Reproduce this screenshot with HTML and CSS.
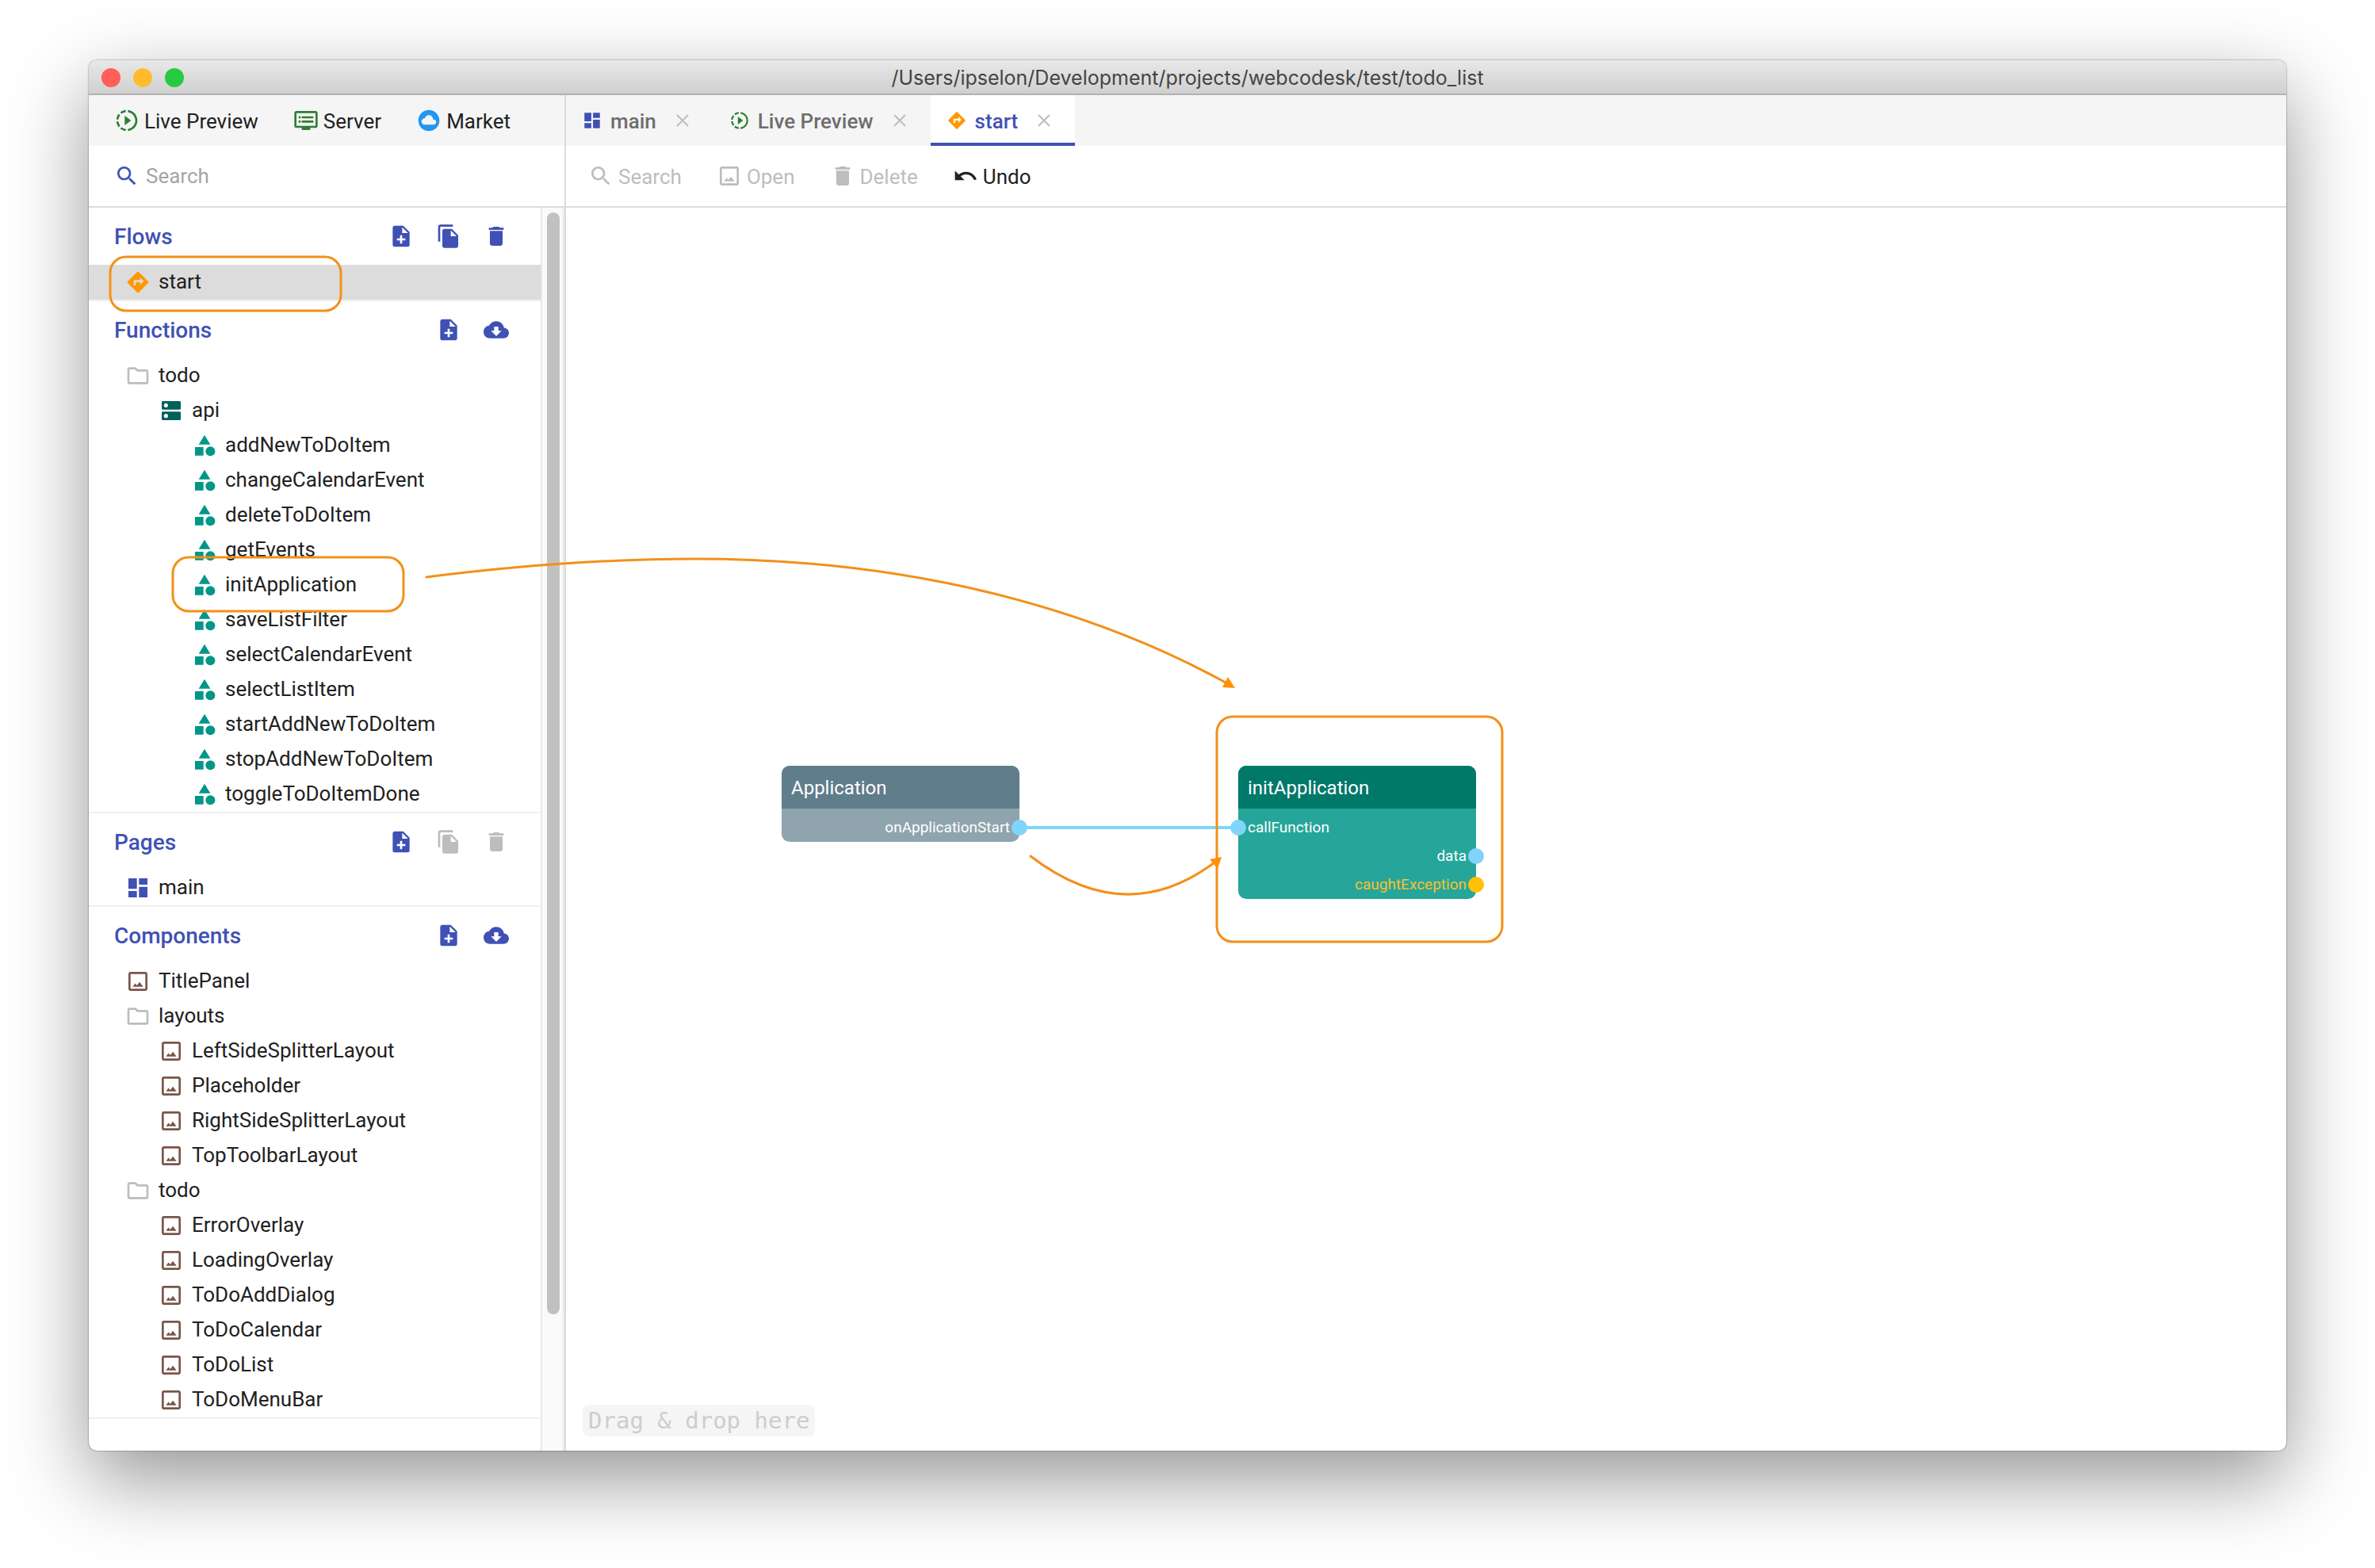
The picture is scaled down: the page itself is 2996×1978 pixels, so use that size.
FILE: index.html
```html
<!DOCTYPE html>
<html lang="en">
<head>
<meta charset="utf-8">
<title>webcodesk - todo_list</title>
<link rel="stylesheet" href="styles.css">
</head>
<body>
<svg class="sprite" aria-hidden="true">
  <symbol id="i-live" viewBox="0 0 24 24"><path d="M13.05 9.79L10 7.5v9l3.05-2.29L16 12zm0 0L10 7.5v9l3.05-2.29L16 12zM11 4.07V2.05c-2.01.2-3.84 1-5.32 2.21L7.1 5.69c1.11-.86 2.44-1.44 3.9-1.62zM5.69 7.1L4.26 5.68C3.05 7.16 2.25 8.99 2.05 11h2.02c.18-1.46.76-2.79 1.62-3.9zM4.07 13H2.05c.2 2.01 1 3.84 2.21 5.32l1.43-1.43c-.86-1.1-1.44-2.43-1.62-3.89zm1.61 6.74C7.16 20.95 9 21.75 11 21.95v-2.02c-1.46-.18-2.79-.76-3.9-1.62l-1.42 1.43zM22 12c0 5.16-3.92 9.42-8.95 9.95v-2.02C16.97 19.41 20 16.05 20 12s-3.03-7.41-6.95-7.93V2.05C18.08 2.58 22 6.84 22 12z"/></symbol>
  <symbol id="i-server" viewBox="0 0 24 24"><path d="M21 3H3c-1.1 0-2 .9-2 2v12c0 1.1.9 2 2 2h5v2h8v-2h5c1.1 0 1.99-.9 1.99-2L23 5c0-1.1-.9-2-2-2zm0 14H3V5h18v12zm-2-9H8v2h11V8zm0 4H8v2h11v-2zM7 8H5v2h2V8zm0 4H5v2h2v-2z"/></symbol>
  <symbol id="i-market" viewBox="0 0 24 24"><path d="M12 2C6.48 2 2 6.48 2 12s4.48 10 10 10 10-4.48 10-10S17.52 2 12 2zm4.5 14H8c-1.66 0-3-1.34-3-3s1.34-3 3-3l.14.01C8.58 8.28 10.13 7 12 7c2.21 0 4 1.79 4 4h.5c1.38 0 2.5 1.12 2.5 2.5S17.88 16 16.5 16z"/></symbol>
  <symbol id="i-search" viewBox="0 0 24 24"><path d="M15.5 14h-.79l-.28-.27C15.41 12.59 16 11.11 16 9.5 16 5.91 13.09 3 9.5 3S3 5.91 3 9.5 5.91 16 9.5 16c1.61 0 3.09-.59 4.23-1.57l.27.28v.79l5 4.99L20.49 19l-4.99-5zm-6 0C7.01 14 5 11.99 5 9.5S7.01 5 9.5 5 14 7.01 14 9.5 11.99 14 9.5 14z"/></symbol>
  <symbol id="i-image" viewBox="0 0 24 24"><path d="M19 5v14H5V5h14m0-2H5c-1.1 0-2 .9-2 2v14c0 1.1.9 2 2 2h14c1.1 0 2-.9 2-2V5c0-1.1-.9-2-2-2zM7 17l2.4-3.2 1.7 2 2.500-3.200L17 17z"/></symbol>
  <symbol id="i-delete" viewBox="0 0 24 24"><path d="M6 19c0 1.1.9 2 2 2h8c1.1 0 2-.9 2-2V7H6v12zM19 4h-3.5l-1-1h-5l-1 1H5v2h14V4z"/></symbol>
  <symbol id="i-undo" viewBox="0 0 24 24"><path d="M12.5 8c-2.65 0-5.05.99-6.9 2.6L2 7v9h9l-3.62-3.62c1.39-1.16 3.16-1.88 5.12-1.88 3.54 0 6.55 2.31 7.6 5.5l2.37-.78C21.08 11.03 17.15 8 12.5 8z"/></symbol>
  <symbol id="i-page" viewBox="0 0 24 24"><path d="M3 13h8V3H3v10zm0 8h8v-6H3v6zm10 0h8V11h-8v10zm0-18v6h8V3h-8z"/></symbol>
  <symbol id="i-flow" viewBox="0 0 24 24"><path d="M21.71 11.29l-9-9c-.39-.39-1.02-.39-1.41 0l-9 9c-.39.39-.39 1.02 0 1.41l9 9c.39.39 1.02.39 1.41 0l9-9c.39-.38.39-1.01 0-1.41zM14 14.5V12h-4v3H8v-4c0-.55.45-1 1-1h5V7.5l3.5 3.5-3.5 3.5z"/></symbol>
  <symbol id="i-add" viewBox="0 0 24 24"><path d="M14 2H6c-1.1 0-1.99.9-1.99 2L4 20c0 1.1.89 2 1.99 2H18c1.1 0 2-.9 2-2V8l-6-6zm2 14h-3v3h-2v-3H8v-2h3v-3h2v3h3v2zm-3-7V3.5L18.5 9H13z"/></symbol>
  <symbol id="i-copy" viewBox="0 0 24 24"><path d="M16 1H4c-1.1 0-2 .9-2 2v14h2V3h12V1zm-1 4l6 6v10c0 1.1-.9 2-2 2H7.99C6.89 23 6 22.1 6 21l.01-14c0-1.1.89-2 1.99-2h7zm-1 7h5.5L14 6.5V12z"/></symbol>
  <symbol id="i-cloud" viewBox="0 0 24 24"><path d="M19.35 10.04C18.67 6.59 15.64 4 12 4 9.11 4 6.6 5.64 5.35 8.04 2.34 8.36 0 10.91 0 14c0 3.31 2.69 6 6 6h13c2.76 0 5-2.24 5-5 0-2.64-2.05-4.78-4.65-4.96zM17 13l-5 5-5-5h3V9h4v4h3z"/></symbol>
  <symbol id="i-folder" viewBox="0 0 24 24"><path d="M9.17 6l2 2H20v10H4V6h5.17M10 4H4c-1.1 0-1.99.9-1.99 2L2 18c0 1.1.9 2 2 2h16c1.1 0 2-.9 2-2V8c0-1.1-.9-2-2-2h-8l-2-2z"/></symbol>
  <symbol id="i-api" viewBox="0 0 24 24"><path d="M20 13H4c-.55 0-1 .45-1 1v6c0 .55.45 1 1 1h16c.55 0 1-.45 1-1v-6c0-.55-.45-1-1-1zM7 19c-1.1 0-2-.9-2-2s.9-2 2-2 2 .9 2 2-.9 2-2 2zM20 3H4c-.55 0-1 .45-1 1v6c0 .55.45 1 1 1h16c.55 0 1-.45 1-1V4c0-.55-.45-1-1-1zM7 9c-1.1 0-2-.9-2-2s.9-2 2-2 2 .9 2 2-.9 2-2 2z"/></symbol>
  <symbol id="i-func" viewBox="0 0 24 24"><path d="M12 2l-5.5 9h11zM3 13.5h8v8H3z"/><circle cx="17.5" cy="17.5" r="4.5"/></symbol>
  <symbol id="i-close" viewBox="0 0 16 16"><path d="M1 1l14 14M15 1L1 15" fill="none" stroke="currentColor" stroke-width="2"/></symbol>
</svg>

<main class="window">
  <header class="titlebar">
    <div class="lights"><span class="light red"></span><span class="light yellow"></span><span class="light green-light"></span></div>
    <h1 class="title">/Users/ipselon/Development/projects/webcodesk/test/todo_list</h1>
  </header>

  <div class="body">
    <aside class="sidebar">
      <nav class="actions bar">
        <button class="action"><svg class="icon green"><use href="#i-live"/></svg>Live Preview</button>
        <button class="action"><svg class="icon green"><use href="#i-server"/></svg>Server</button>
        <button class="action"><svg class="icon blue"><use href="#i-market"/></svg>Market</button>
      </nav>
      <label class="search"><svg class="icon indigo"><use href="#i-search"/></svg><input class="search-input" type="text" placeholder="Search" aria-label="Search"></label>

      <div class="scroller">
        <div class="tree">
          <section class="group">
            <div class="group-head"><h2 class="group-title">Flows</h2>
              <button class="tool" aria-label="Add flow"><svg class="icon"><use href="#i-add"/></svg></button>
              <button class="tool" aria-label="Copy flow"><svg class="icon"><use href="#i-copy"/></svg></button>
              <button class="tool" aria-label="Delete flow"><svg class="icon"><use href="#i-delete"/></svg></button>
            </div>
            <ul class="list">
              <li class="row selected"><svg class="icon orange"><use href="#i-flow"/></svg>start</li>
            </ul>
          </section>
          <section class="group">
            <div class="group-head"><h2 class="group-title">Functions</h2>
              <button class="tool" aria-label="Add functions"><svg class="icon"><use href="#i-add"/></svg></button>
              <button class="tool" aria-label="Download functions"><svg class="icon"><use href="#i-cloud"/></svg></button>
            </div>
            <ul class="list">
              <li class="row"><svg class="icon grey"><use href="#i-folder"/></svg>todo</li>
              <li class="row level-2"><svg class="icon deep-teal"><use href="#i-api"/></svg>api</li>
              <li class="row level-3"><svg class="icon teal"><use href="#i-func"/></svg>addNewToDoItem</li>
              <li class="row level-3"><svg class="icon teal"><use href="#i-func"/></svg>changeCalendarEvent</li>
              <li class="row level-3"><svg class="icon teal"><use href="#i-func"/></svg>deleteToDoItem</li>
              <li class="row level-3"><svg class="icon teal"><use href="#i-func"/></svg>getEvents</li>
              <li class="row level-3"><svg class="icon teal"><use href="#i-func"/></svg>initApplication</li>
              <li class="row level-3"><svg class="icon teal"><use href="#i-func"/></svg>saveListFilter</li>
              <li class="row level-3"><svg class="icon teal"><use href="#i-func"/></svg>selectCalendarEvent</li>
              <li class="row level-3"><svg class="icon teal"><use href="#i-func"/></svg>selectListItem</li>
              <li class="row level-3"><svg class="icon teal"><use href="#i-func"/></svg>startAddNewToDoItem</li>
              <li class="row level-3"><svg class="icon teal"><use href="#i-func"/></svg>stopAddNewToDoItem</li>
              <li class="row level-3"><svg class="icon teal"><use href="#i-func"/></svg>toggleToDoItemDone</li>
            </ul>
          </section>
          <section class="group">
            <div class="group-head"><h2 class="group-title">Pages</h2>
              <button class="tool" aria-label="Add page"><svg class="icon"><use href="#i-add"/></svg></button>
              <button class="tool" aria-label="Copy page" disabled><svg class="icon"><use href="#i-copy"/></svg></button>
              <button class="tool" aria-label="Delete page" disabled><svg class="icon"><use href="#i-delete"/></svg></button>
            </div>
            <ul class="list">
              <li class="row"><svg class="icon indigo"><use href="#i-page"/></svg>main</li>
            </ul>
          </section>
          <section class="group">
            <div class="group-head"><h2 class="group-title">Components</h2>
              <button class="tool" aria-label="Add component"><svg class="icon"><use href="#i-add"/></svg></button>
              <button class="tool" aria-label="Download components"><svg class="icon"><use href="#i-cloud"/></svg></button>
            </div>
            <ul class="list">
              <li class="row"><svg class="icon brown"><use href="#i-image"/></svg>TitlePanel</li>
              <li class="row"><svg class="icon grey"><use href="#i-folder"/></svg>layouts</li>
              <li class="row level-2"><svg class="icon brown"><use href="#i-image"/></svg>LeftSideSplitterLayout</li>
              <li class="row level-2"><svg class="icon brown"><use href="#i-image"/></svg>Placeholder</li>
              <li class="row level-2"><svg class="icon brown"><use href="#i-image"/></svg>RightSideSplitterLayout</li>
              <li class="row level-2"><svg class="icon brown"><use href="#i-image"/></svg>TopToolbarLayout</li>
              <li class="row"><svg class="icon grey"><use href="#i-folder"/></svg>todo</li>
              <li class="row level-2"><svg class="icon brown"><use href="#i-image"/></svg>ErrorOverlay</li>
              <li class="row level-2"><svg class="icon brown"><use href="#i-image"/></svg>LoadingOverlay</li>
              <li class="row level-2"><svg class="icon brown"><use href="#i-image"/></svg>ToDoAddDialog</li>
              <li class="row level-2"><svg class="icon brown"><use href="#i-image"/></svg>ToDoCalendar</li>
              <li class="row level-2"><svg class="icon brown"><use href="#i-image"/></svg>ToDoList</li>
              <li class="row level-2"><svg class="icon brown"><use href="#i-image"/></svg>ToDoMenuBar</li>
            </ul>
          </section>
        </div>
        <div class="track"><div class="thumb"></div></div>
      </div>
    </aside>

    <section class="editor">
      <div class="tabs bar">
        <div class="tab"><svg class="icon small indigo"><use href="#i-page"/></svg>main<button class="close" aria-label="Close main"><svg class="cross"><use href="#i-close"/></svg></button></div>
        <div class="tab"><svg class="icon small green"><use href="#i-live"/></svg>Live Preview<button class="close" aria-label="Close Live Preview"><svg class="cross"><use href="#i-close"/></svg></button></div>
        <div class="tab active"><svg class="icon small orange"><use href="#i-flow"/></svg>start<button class="close" aria-label="Close start"><svg class="cross"><use href="#i-close"/></svg></button></div>
      </div>
      <div class="toolbar">
        <button class="action" disabled><svg class="icon"><use href="#i-search"/></svg>Search</button>
        <button class="action" disabled><svg class="icon"><use href="#i-image"/></svg>Open</button>
        <button class="action" disabled><svg class="icon"><use href="#i-delete"/></svg>Delete</button>
        <button class="action"><svg class="icon"><use href="#i-undo"/></svg>Undo</button>
      </div>
      <div class="canvas">
        <article class="node app-node">
          <h3 class="node-title">Application</h3>
          <div class="port out">onApplicationStart<span class="dot"></span></div>
        </article>
        <article class="node init-node">
          <h3 class="node-title">initApplication</h3>
          <div class="port in">callFunction<span class="dot"></span></div>
          <div class="port out">data<span class="dot"></span></div>
          <div class="port out error">caughtException<span class="dot"></span></div>
        </article>
        <div class="wire"></div>
        <p class="hint">Drag &amp; drop here</p>
      </div>
    </section>
  </div>

  <svg class="notes" aria-hidden="true">
    <g fill="none" stroke="#f39019" stroke-width="3" stroke-linecap="round">
      <rect x="27" y="248" width="291" height="68" rx="20"/>
      <rect x="106" y="627" width="291" height="68" rx="20"/>
      <rect x="1423" y="828" width="360" height="284" rx="20"/>
      <path d="M426 652C545 637 655 629 765 629C1040 629 1265 692 1436 786"/>
      <path d="M1188 1004Q1308 1096 1420 1012"/>
    </g>
    <g fill="#ff9100">
      <path d="M1446 792L1437 778L1430 791z"/>
      <path d="M1429 1005L1414 1008L1424 1020z"/>
    </g>
  </svg>
</main>
</body>
</html>
```
FILE: styles.css
```css
* { box-sizing: border-box; }

body {
  margin: 0;
  padding: 76px 112px 148px;
  min-height: 100vh;
  display: flex;
  background: #fff;
  color: #212121;
  font-family: Roboto, "Liberation Sans", sans-serif;
  font-size: 26px;
  line-height: 32px;
}

h1, h2, h3, p, ul { margin: 0; padding: 0; font-weight: 400; }
ul { list-style: none; }
button, input { font: inherit; color: inherit; border: 0; padding: 0; background: none; outline: 0; }

.sprite { position: absolute; width: 0; height: 0; }

.window {
  position: relative;
  flex: 1;
  display: flex;
  flex-direction: column;
  border-radius: 10px;
  background: #fff;
  box-shadow: 0 0 2px rgba(0, 0, 0, .6), 0 36px 100px rgba(0, 0, 0, .42);
}

.titlebar {
  display: grid;
  grid-template-columns: 1fr auto 1fr;
  align-items: center;
  height: 44px;
  padding: 2px 16px 0;
  border-bottom: 2px solid #b1b1b1;
  border-radius: 10px 10px 0 0;
  background: linear-gradient(#e8e8e8, #d0d0d0);
}
.lights { display: flex; gap: 16px; }
.light { width: 24px; height: 24px; border-radius: 50%; }
.red { background: #ff5f57; }
.yellow { background: #ffbd2e; }
.green-light { background: #28ca42; }
.title { font-family: Inter, "Liberation Sans", sans-serif; font-size: 25px; color: #444; }

.body { flex: 1; display: flex; }
.sidebar { width: 602px; display: flex; flex-direction: column; border-right: 2px solid #dcdcdc; }
.editor { flex: 1; display: flex; flex-direction: column; }

.bar { height: 64px; display: flex; background: #f5f5f5; }
.actions { align-items: center; gap: 44px; padding: 0 32px; }

/* Labels sit a pixel below the icon's centre line */
.action { display: flex; align-items: center; gap: 6px; padding-top: 2px; }
.action .icon, .tab .icon { margin-bottom: 2px; }
.action:disabled { color: #bdbdbd; }

.icon { width: 32px; height: 32px; flex: none; fill: currentColor; display: block; }
.small { width: 26px; height: 26px; }
.green { color: #2e7d32; }
.blue { color: #2196f3; }
.indigo { color: #3f51b5; }
.orange { color: #ff9800; }
.grey { color: #bdbdbd; }
.teal { color: #009688; }
.deep-teal { color: #00605c; }
.brown { color: #795548; }

.search {
  display: flex;
  align-items: center;
  gap: 8px;
  height: 78px;
  padding: 0 32px;
  border-bottom: 2px solid #dcdcdc;
}
.search-input { flex: 1; min-width: 0; }
.search-input::placeholder { color: #a5a5a5; opacity: 1; }

.scroller { flex: 1; display: flex; }
.tree { flex: 1; }
.track {
  width: 30px;
  padding: 6px 6px 0;
  border: solid #e8e8e8;
  border-width: 0 2px;
  background: #fafafa;
}
.thumb { width: 16px; height: 89%; border-radius: 8px; background: #c1c1c1; }

.group { border-bottom: 2px solid #f0f0f0; }
.group-head { display: flex; align-items: center; gap: 28px; height: 72px; padding: 0 40px 0 32px; color: #3f51b5; }
.group-title { flex: 1; padding-top: 2px; font-size: 28px; font-weight: 500; }
.tool:disabled { color: #bdbdbd; }

/* Row labels sit a pixel above the icon's centre line */
.row { display: flex; align-items: center; gap: 10px; height: 44px; padding: 0 0 2px 46px; }
.row .icon { margin-top: 2px; }
.level-2 { padding-left: 88px; }
.level-3 { padding-left: 130px; }
.selected { background: #dcdcdc; }

.tab { display: flex; align-items: center; gap: 10px; padding: 2px 24px 0 20px; color: #6e6e6e; font-weight: 500; }
.active { background: #fff; color: #3f51b5; box-shadow: inset 0 -4px #3f51b5; }
.close { display: grid; place-items: center; width: 30px; height: 30px; margin: 0 0 2px 8px; color: #bdbdbd; }
.cross { width: 16px; height: 16px; }

.toolbar { display: flex; align-items: center; gap: 44px; height: 78px; padding: 0 28px; border-bottom: 2px solid #dcdcdc; }

.canvas { position: relative; flex: 1; display: flex; align-items: flex-end; padding: 20px 20px 18px 21px; }
.hint {
  padding: 4px 7px;
  border-radius: 8px;
  background: #f5f5f5;
  color: #cdcdcd;
  font-family: "DejaVu Sans Mono", monospace;
  font-size: 29px;
}

.node { position: absolute; top: 704px; width: 300px; border-radius: 10px; color: #fff; }
.app-node { left: 272px; background: #90a4ae; }
.init-node { left: 848px; background: #26a69a; }
.node-title { height: 54px; margin-bottom: 6px; padding: 0 12px; border-radius: 10px 10px 0 0; font-size: 24px; line-height: 56px; }
.app-node .node-title { background: #607d8b; }
.init-node .node-title { background: #00796b; }
.port { position: relative; height: 36px; padding: 0 12px; font-size: 19px; line-height: 36px; }
.out { text-align: right; }
.error { color: #fbc02d; }
.dot { position: absolute; top: 8px; width: 20px; height: 20px; border-radius: 50%; background: #81d4fa; }
.in .dot { left: -10px; }
.out .dot { right: -10px; }
.error .dot { background: #ffc107; }
.wire { position: absolute; left: 572px; top: 780px; width: 276px; height: 4px; background: #81d4fa; }

.notes { position: absolute; left: 0; top: 0; width: 100%; height: 100%; pointer-events: none; }
```
